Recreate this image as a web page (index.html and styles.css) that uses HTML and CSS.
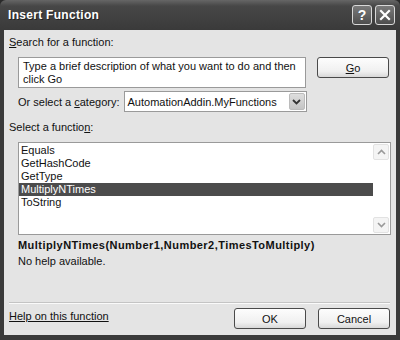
FILE: index.html
```html
<!DOCTYPE html>
<html>
<head>
<meta charset="utf-8">
<link rel="stylesheet" href="styles.css">
</head>
<body>
<div class="window">
  <div class="titlebar">
    <span class="title">Insert Function</span>
    <div class="caps">
      <span class="cap">?</span>
      <span class="cap">
        <svg width="12" height="12" viewBox="0 0 12 12"><path d="M2 2 L10 10 M10 2 L2 10" stroke="#fff" stroke-width="2.2" stroke-linecap="square"/></svg>
      </span>
    </div>
  </div>
  <div class="client">
    <div class="lbl top"><u>S</u>earch for a function:</div>
    <div class="row search">
      <div class="textarea">Type a brief description of what you want to do and then click Go</div>
      <div class="btn go"><u>G</u>o</div>
    </div>
    <div class="row cat">
      <span class="lbl2">Or select a <u>c</u>ategory:</span>
      <div class="select">
        <span class="seltext">AutomationAddin.MyFunctions</span>
        <span class="drop"><svg width="9" height="6" viewBox="0 0 9 6"><path d="M1 1 L4.5 4.5 L8 1" fill="none" stroke="#333" stroke-width="1.8"/></svg></span>
      </div>
    </div>
    <div class="lbl sel">Select a functio<u>n</u>:</div>
    <div class="list">
      <div class="items">
        <div class="item">Equals</div>
        <div class="item">GetHashCode</div>
        <div class="item">GetType</div>
        <div class="item active">MultiplyNTimes</div>
        <div class="item">ToString</div>
      </div>
      <div class="scroll">
        <span class="arrow"><svg width="9" height="6" viewBox="0 0 9 6"><path d="M1 5 L4.5 1.5 L8 5" fill="none" stroke="#999" stroke-width="1.6"/></svg></span>
        <span class="arrow"><svg width="9" height="6" viewBox="0 0 9 6"><path d="M1 1 L4.5 4.5 L8 1" fill="none" stroke="#999" stroke-width="1.6"/></svg></span>
      </div>
    </div>
    <div class="sig">MultiplyNTimes(Number1,Number2,TimesToMultiply)</div>
    <div class="help">No help available.</div>
    <div class="spacer"></div>
    <div class="sep"></div>
    <div class="row bottom">
      <span class="link">Help on this function</span>
      <div class="btns">
        <div class="btn">OK</div>
        <div class="btn">Cancel</div>
      </div>
    </div>
  </div>
</div>
</body>
</html>
```
FILE: styles.css
```css
* { box-sizing: border-box; }
html, body { margin: 0; padding: 0; background: #2a2a2a; }
body { font-family: "Liberation Sans", Arial, sans-serif; font-size: 11px; color: #111; }
.window {
  width: 400px; height: 340px;
  display: flex; flex-direction: column;
  padding: 0 4px 5px 4px;
  border-radius: 6px 6px 0 0;
  background: linear-gradient(#666, #474747 6px, #3a3a3a 30px, #3a3a3a);
}
.titlebar {
  height: 30px; flex: none;
  display: flex; align-items: center; justify-content: space-between;
  padding: 0 1px 0 4px;
}
.title { color: #fff; font-weight: bold; font-size: 12px; letter-spacing: 0.3px; text-shadow: 1px 1px 0 #222; }
.caps { display: flex; gap: 3px; }
.cap {
  width: 20px; height: 20px;
  border: 1px solid #d8d8d8; border-radius: 3px;
  background: linear-gradient(#7a7a7a, #4e4e4e);
  color: #fff; font-weight: bold; font-size: 14px;
  display: flex; align-items: center; justify-content: center;
}
.client {
  flex: 1; background: #e4e4e4;
  display: flex; flex-direction: column;
  padding: 6px 6px 0 5px;
}
.lbl { line-height: 13px; }
.row { display: flex; align-items: flex-start; }
.search { padding-left: 9px; margin-top: 8px; gap: 11px; }
.textarea {
  width: 288px; height: 31px;
  background: #fff; border: 1px solid #9a9a9a;
  padding: 2px 4px; line-height: 13px;
}
.btn {
  width: 72px; height: 21px;
  border: 1px solid #4a4a4a; border-radius: 3px;
  background: linear-gradient(#fdfdfd, #f0f0f0 70%, #d8d8d8);
  display: flex; align-items: center; justify-content: center;
}
.cat { padding-left: 9px; margin-top: 3px; align-items: center; gap: 4px; }
.select {
  width: 183px; height: 21px;
  background: #fff; border: 1px solid #9a9a9a;
  display: flex; align-items: center; justify-content: space-between;
  padding: 0 1px 0 3px;
}
.drop {
  width: 16px; height: 17px;
  background: linear-gradient(#dedede, #c4c4c4);
  border: 1px solid #bbb; border-radius: 2px;
  display: flex; align-items: center; justify-content: center;
}
.sel { margin-top: 9px; }
.list {
  margin: 8px 0 0 9px; width: 373px; height: 93px;
  background: #fff; border: 1px solid #9a9a9a;
  display: flex;
}
.items { flex: 1; padding-top: 1px; }
.item { height: 13px; line-height: 13px; padding-left: 2px; }
.item.active { background: #4c4c4c; color: #fff; }
.scroll {
  width: 16px; display: flex; flex-direction: column; justify-content: space-between;
  padding: 1px 0; margin-right: 1px;
}
.arrow {
  width: 16px; height: 16px; background: #f4f4f4; border: 1px solid #e2e2e2; border-radius: 2px;
  display: flex; align-items: center; justify-content: center;
}
.sig { margin: 3px 0 0 9px; font-weight: bold; line-height: 14px; letter-spacing: 0.45px; }
.help { margin: 3px 0 0 9px; line-height: 13px; }
.spacer { flex: 1; }
.sep { height: 2px; border-top: 1px solid #c4c4c4; border-bottom: 1px solid #fafafa; }
.bottom { justify-content: space-between; padding: 4px 0 6px 0; }
.link { text-decoration: underline; color: #111; margin-top: 2px; line-height: 13px; }
.btns { display: flex; gap: 12px; }
```
